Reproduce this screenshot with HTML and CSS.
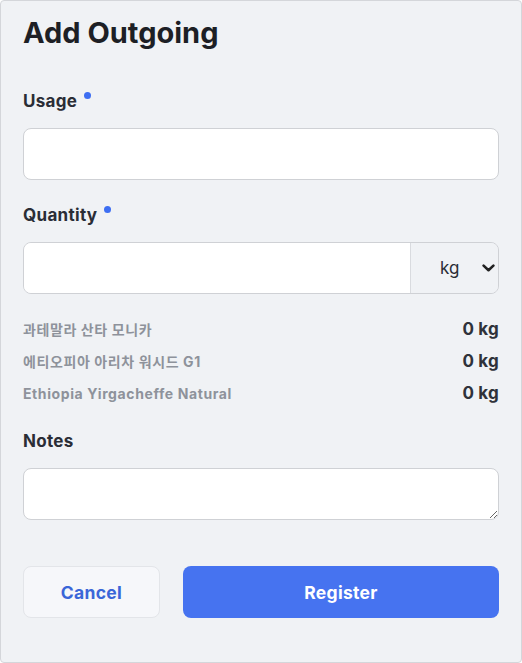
FILE: index.html
```html
<!DOCTYPE html>
<html lang="ko">
<head>
  <meta charset="UTF-8" />
  <meta name="viewport" content="width=device-width, initial-scale=1.0" />
  <title>Add Outgoing</title>
  <link rel="stylesheet" href="styles.css">
</head>
<body>

  <div class="modal">
    <h1>Add Outgoing</h1>

    <div class="field">
      <label class="label required">Usage</label>
      <input class="input" type="text" />
    </div>

    <div class="field">
      <label class="label required">Quantity</label>
      <div class="input-group">
        <input class="input" type="text" />
        <div class="unit">
          <span>kg</span>
          <svg width="13" height="8" viewBox="0 0 13 8"><path d="M1.6 1.6 L6.5 6.2 L11.4 1.6" fill="none" stroke="#222" stroke-width="2.6" stroke-linecap="round" stroke-linejoin="round"/></svg>
        </div>
      </div>
    </div>

    <ul class="stock">
      <li><span class="bean">과테말라 산타 모니카</span><span class="amount">0 kg</span></li>
      <li><span class="bean">에티오피아 아리차 워시드 G1</span><span class="amount">0 kg</span></li>
      <li><span class="bean">Ethiopia Yirgacheffe Natural</span><span class="amount">0 kg</span></li>
    </ul>

    <div class="field">
      <label class="label">Notes</label>
      <textarea class="input notes"></textarea>
    </div>

    <div class="actions">
      <button class="btn cancel">Cancel</button>
      <button class="btn register">Register</button>
    </div>
  </div>

</body>
</html>
```

FILE: styles.css
```css
body {
  margin: 0;
  background-color: #ffffff;
  font-family: Inter, "Noto Sans CJK KR", sans-serif;
  color: #23252b;
}
.modal {
  box-sizing: border-box;
  width: 522px;
  height: 663px;
  padding: 14px 22px 0 22px;
  background-color: #f0f2f5;
  border: 1px solid #d4d6da;
  border-radius: 4px;
}
h1 {
  margin: 0 0 39px;
  font-size: 29px;
  line-height: 36px;
  font-weight: 700;
  color: #1d1f25;
}
.field {
  margin-bottom: 24px;
}
.label {
  display: block;
  position: relative;
  width: max-content;
  margin-bottom: 16px;
  font-size: 17px;
  line-height: 22px;
  font-weight: 700;
  letter-spacing: 0.3px;
  color: #2a2d35;
}
.required::after {
  content: "";
  position: absolute;
  top: 2px;
  right: -14px;
  width: 7px;
  height: 7px;
  border-radius: 50%;
  background-color: #3d6ef2;
}
.input {
  display: block;
  box-sizing: border-box;
  width: 100%;
  height: 52px;
  margin: 0;
  border: 1px solid #cfd1d5;
  border-radius: 8px;
  background-color: #ffffff;
  font: inherit;
}
.input-group {
  display: flex;
  box-sizing: border-box;
  height: 52px;
  border: 1px solid #cfd1d5;
  border-radius: 8px;
  overflow: hidden;
}
.input-group .input {
  flex: 1;
  height: 100%;
  border: none;
  border-radius: 0;
}
.unit {
  display: flex;
  align-items: center;
  gap: 23px;
  width: 88px;
  box-sizing: border-box;
  padding-left: 29px;
  border-left: 1px solid #d9dbdf;
  background-color: #f0f2f5;
  font-size: 17px;
  color: #2a2d35;
}
.stock {
  list-style: none;
  margin: -5px 0 21px;
  padding: 0;
}
.stock li {
  display: flex;
  justify-content: space-between;
  align-items: center;
  height: 32px;
}
.bean {
  font-size: 14px;
  font-weight: 700;
  letter-spacing: 0.6px;
  color: #8e929b;
}
.amount {
  font-size: 17px;
  font-weight: 700;
  letter-spacing: 0.2px;
  color: #2f323a;
}
.notes {
  resize: vertical;
}
.actions {
  display: flex;
  gap: 23px;
  margin-top: 46px;
}
.btn {
  height: 52px;
  border-radius: 8px;
  font-family: inherit;
  font-size: 17.5px;
  font-weight: 700;
  letter-spacing: 0.3px;
}
.cancel {
  width: 137px;
  border: 1px solid #e3e5e9;
  background-color: #f6f7fa;
  color: #3a66d8;
}
.register {
  flex: 1;
  border: none;
  background-color: #4673f0;
  color: #ffffff;
}
```
